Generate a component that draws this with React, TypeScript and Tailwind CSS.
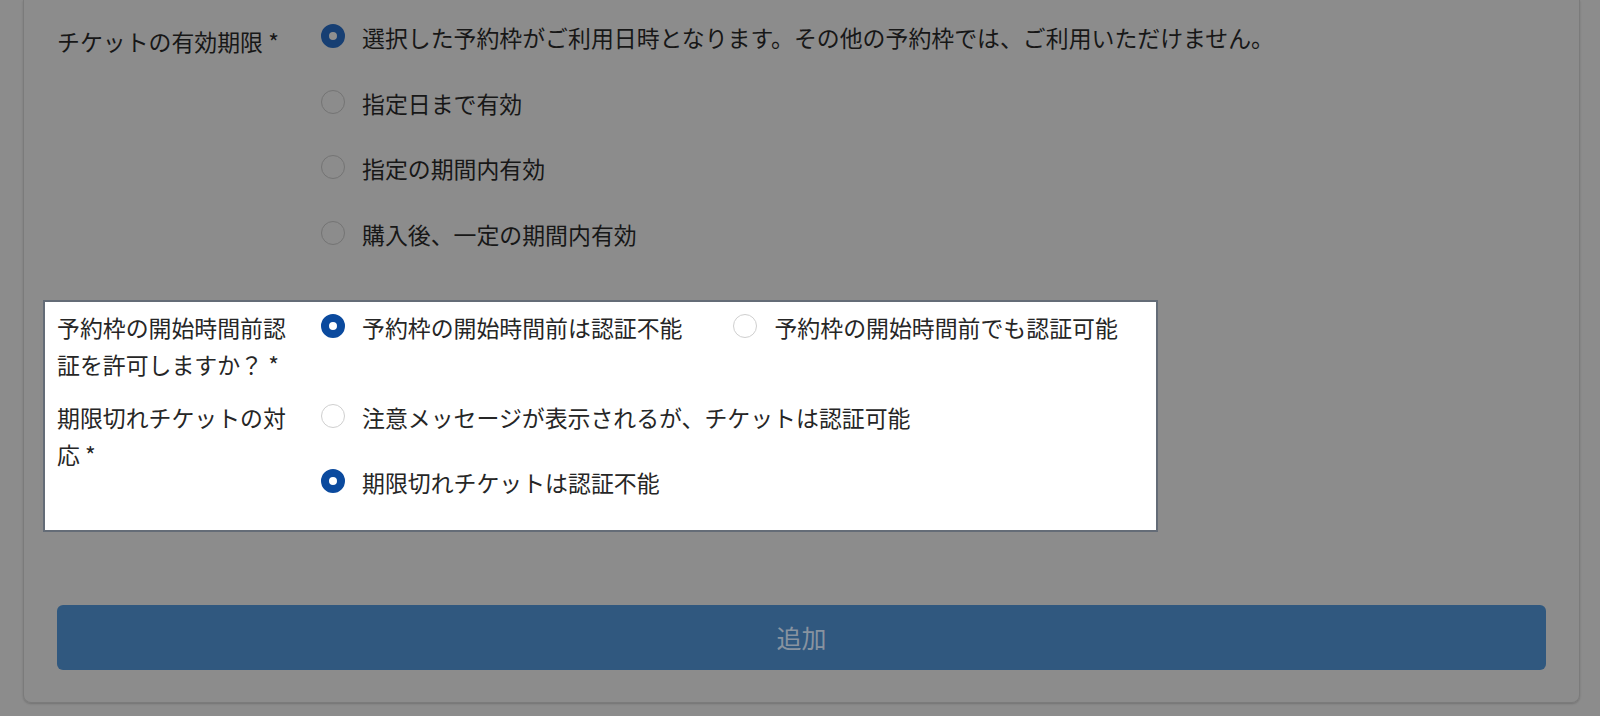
const font = { fontFamily: '"Noto Sans CJK JP", "Noto Sans", sans-serif' };

type Opt = { label: string; checked?: boolean };

const DimRadio = ({ checked }: { checked?: boolean }) =>
  checked ? (
    <span className="shrink-0 w-6 h-6 rounded-full border-[8px] border-[#173f73] bg-[#8f8f8f] mb-[3px]" />
  ) : (
    <span className="shrink-0 w-6 h-6 rounded-full border-[1.5px] border-[#747474] bg-[#8c8c8c] mb-[3px]" />
  );

const LitRadio = ({ checked }: { checked?: boolean }) =>
  checked ? (
    <span className="shrink-0 w-6 h-6 rounded-full border-[8px] border-[#0b4a9e] bg-white mb-[2px]" />
  ) : (
    <span className="shrink-0 w-6 h-6 rounded-full border-[1.5px] border-[#cfcfcf] bg-white mb-[2px]" />
  );

const expiryOptions: Opt[] = [
  { label: "選択した予約枠がご利用日時となります。その他の予約枠では、ご利用いただけません。", checked: true },
  { label: "指定日まで有効" },
  { label: "指定の期間内有効" },
  { label: "購入後、一定の期間内有効" },
];

const App = () => {
  return (
    <div
      className="w-full h-[716px] overflow-hidden bg-[#8c8c8c] pl-[23px] pr-[20px] text-[22.9px] leading-[37px]"
      style={font}
    >
      <div className="border-x border-b border-[#7b7b7b] rounded-b-lg shadow-[0_1px_2px_rgba(0,0,0,0.18)] px-[33px] pt-[19px] pb-[32px]">
        {/* dimmed section */}
        <div className="flex text-[#171717]">
          <div className="w-[264px] shrink-0 pt-[4px] pr-[20px]">チケットの有効期限 *</div>
          <div className="flex flex-col gap-[28.6px]">
            {expiryOptions.map((o) => (
              <div key={o.label} className="h-[37px] flex items-center gap-[17px] whitespace-nowrap">
                <DimRadio checked={o.checked} />
                <span>{o.label}</span>
              </div>
            ))}
          </div>
        </div>

        {/* highlighted box */}
        <div className="-ml-[14px] mt-[47px] w-[1115px] bg-white border-2 border-[#646c77] pl-[12px] pt-[7px] pb-[29px] text-[#262626] flex flex-col gap-[16px]">
          <div className="flex">
            <div className="w-[264px] shrink-0 pr-[22px]">予約枠の開始時間前認証を許可しますか？ *</div>
            <div className="flex gap-x-[51px]">
              <div className="h-[37px] flex items-center gap-[17px] whitespace-nowrap">
                <LitRadio checked />
                <span>予約枠の開始時間前は認証不能</span>
              </div>
              <div className="h-[37px] flex items-center gap-[17px] whitespace-nowrap">
                <LitRadio />
                <span>予約枠の開始時間前でも認証可能</span>
              </div>
            </div>
          </div>
          <div className="flex">
            <div className="w-[264px] shrink-0 pr-[22px]">期限切れチケットの対応 *</div>
            <div className="flex flex-col gap-[28px]">
              <div className="h-[37px] flex items-center gap-[17px] whitespace-nowrap">
                <LitRadio />
                <span>注意メッセージが表示されるが、チケットは認証可能</span>
              </div>
              <div className="h-[37px] flex items-center gap-[17px] whitespace-nowrap">
                <LitRadio checked />
                <span>期限切れチケットは認証不能</span>
              </div>
            </div>
          </div>
        </div>

        <button className="mt-[73px] w-full h-[65px] rounded-md bg-[#30587f] text-[#8893a0] text-[25px] flex items-center justify-center">
          追加
        </button>
      </div>
    </div>
  );
};

export default App;
